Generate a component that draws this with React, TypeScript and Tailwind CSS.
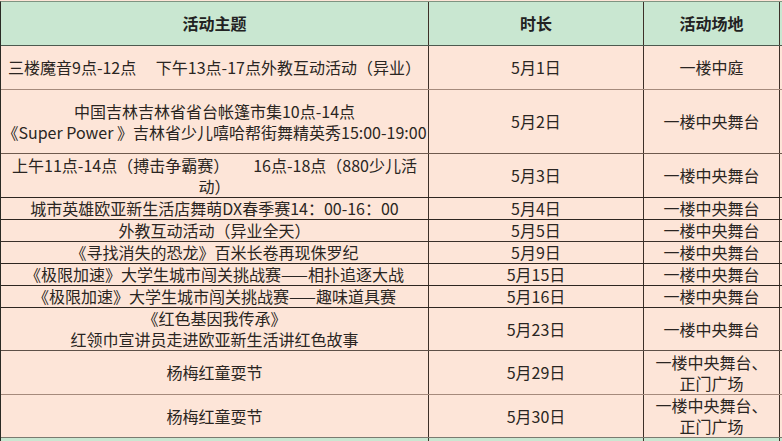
import React from "react";

type Row = {
    topic: React.ReactNode;
    date: string;
    place: React.ReactNode;
    h: string;
    line: string;
};

const rows: Row[] = [
    {
        topic: "三楼魔音9点-12点\u3000 下午13点-17点外教互动活动（异业）",
        date: "5月1日",
        place: "一楼中庭",
        h: "h-[44px]",
        line: "border-[#a58a7c]",
    },
    {
        topic: (
            <>
                中国吉林吉林省省台帐篷市集10点-14点
                <br />
                《Super Power 》吉林省少儿嘻哈帮街舞精英秀15:00-19:00
            </>
        ),
        date: "5月2日",
        place: "一楼中央舞台",
        h: "h-[64px]",
        line: "border-[#6e5a4e]",
    },
    {
        topic: (
            <>
                上午11点-14点（搏击争霸赛）{"\u3000\u3000"}16点-18点（880少儿活
                <br />
                动）
            </>
        ),
        date: "5月3日",
        place: "一楼中央舞台",
        h: "h-[44px]",
        line: "border-[#2e2620]",
    },
    {
        topic: "城市英雄欧亚新生活店舞萌DX春季赛14：00-16：00",
        date: "5月4日",
        place: "一楼中央舞台",
        h: "h-[22px]",
        line: "border-[#2e2620]",
    },
    {
        topic: "外教互动活动（异业全天）",
        date: "5月5日",
        place: "一楼中央舞台",
        h: "h-[22px]",
        line: "border-[#3a302a]",
    },
    {
        topic: "《寻找消失的恐龙》百米长卷再现侏罗纪",
        date: "5月9日",
        place: "一楼中央舞台",
        h: "h-[22px]",
        line: "border-[#2e2620]",
    },
    {
        topic: "《极限加速》大学生城市闯关挑战赛——相扑追逐大战",
        date: "5月15日",
        place: "一楼中央舞台",
        h: "h-[22px]",
        line: "border-[#2e2620]",
    },
    {
        topic: "《极限加速》大学生城市闯关挑战赛——趣味道具赛",
        date: "5月16日",
        place: "一楼中央舞台",
        h: "h-[22px]",
        line: "border-[#2e2620]",
    },
    {
        topic: (
            <>
                《红色基因我传承》
                <br />
                红领巾宣讲员走进欧亚新生活讲红色故事
            </>
        ),
        date: "5月23日",
        place: "一楼中央舞台",
        h: "h-[43px]",
        line: "border-[#5e5048]",
    },
    {
        topic: "杨梅红童耍节",
        date: "5月29日",
        place: (
            <>
                一楼中央舞台、
                <br />
                正门广场
            </>
        ),
        h: "h-[44px]",
        line: "border-[#a58a7c]",
    },
    {
        topic: "杨梅红童耍节",
        date: "5月30日",
        place: (
            <>
                一楼中央舞台、
                <br />
                正门广场
            </>
        ),
        h: "h-[43px]",
        line: "border-[#7b7a70]",
    },
];

const grid = "grid grid-cols-[428px_215px_136px_1fr]";
const cell =
    "flex items-center justify-center text-center border-r-[1.5px] border-[#3d3028]";

export default function App() {
    return (
        <div
            className="w-[782px] h-[441px] overflow-hidden bg-[#fde5d8] text-[#2a2522] text-[16px] leading-[21px]"
            style={{ fontFamily: '"Noto Sans CJK SC", "Noto Sans", sans-serif' }}
        >
            <div className="w-[800px] mt-[1px] border-t-[1.5px] border-l-[1.5px] border-t-[#7f9481] border-l-[#2a2a24]">
                {/* header */}
                <div className={`${grid} h-[44px] bg-[#c9e7d1] font-bold text-[#222] border-b-[1.5px] border-[#4d5a4f]`}>
                    <div className={cell}>活动主题</div>
                    <div className={cell}>时长</div>
                    <div className={cell}>活动场地</div>
                    <div />
                </div>
                {rows.map((r, i) => (
                    <div key={i} className={`${grid} ${r.h} border-b-[1.5px] ${r.line}`}>
                        <div className={`${cell} whitespace-nowrap`}>{r.topic}</div>
                        <div className={cell}>{r.date}</div>
                        <div className={`${cell} whitespace-nowrap`}>{r.place}</div>
                        <div />
                    </div>
                ))}
                <div className={`${grid} h-[20px] bg-[#c9e7d1]`}>
                    <div className={cell} />
                    <div className={cell} />
                    <div className={cell} />
                    <div />
                </div>
            </div>
        </div>
    );
}
